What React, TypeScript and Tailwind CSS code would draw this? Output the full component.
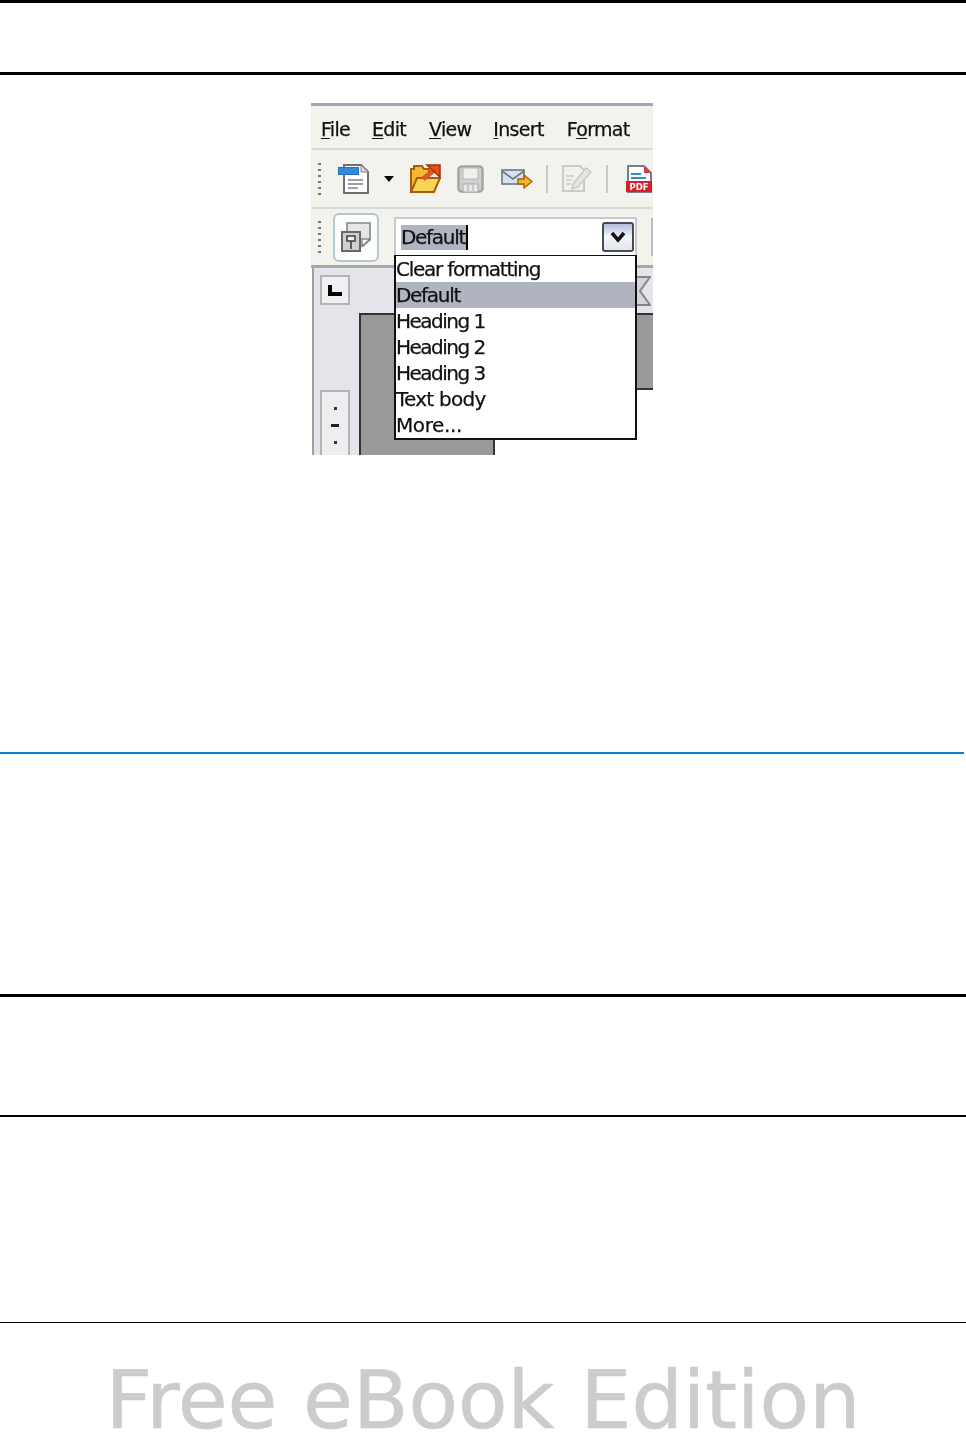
const vera = { fontFamily: '"DejaVu Sans", sans-serif' };

function Grip() {
  return (
    <div className="flex flex-col gap-[4px] w-[3px] ml-[7px]">
      {[0, 1, 2, 3, 4, 5].map((i) => (
        <div key={i} className="w-[3px] h-[2px] bg-[#77777a]" />
      ))}
    </div>
  );
}

function M({ k, r }: { k: string; r: string }) {
  return (
    <span>
      <span className="underline underline-offset-2 decoration-1">{k}</span>
      {r}
    </span>
  );
}

function NewDoc() {
  return (
    <svg width="31" height="30" viewBox="0 0 31 30">
      <path d="M6 1H23L30 8V29H6Z" fill="#fff" stroke="#6f7074" strokeWidth="2" />
      <path d="M23 1V8H30Z" fill="#d8d9de" stroke="#85868a" />
      <rect x="0.5" y="3.5" width="20" height="7" fill="#2f8be0" stroke="#2a6fb5" />
      <path d="M10 16H25M10 20H25M10 24H20" stroke="#7d8088" strokeWidth="1.6" />
    </svg>
  );
}
function Folder() {
  return (
    <svg width="32" height="30" viewBox="0 0 32 30">
      <path d="M2 28V5H5V2H13L15 5H20V28Z" fill="#f2bb36" stroke="#a75c0c" strokeWidth="2" />
      <path d="M2 28L8 14H31L25 28Z" fill="#fbd45a" stroke="#a75c0c" strokeWidth="2" />
      <path d="M14 15L24 7" stroke="#e2561f" strokeWidth="5" />
      <path d="M18 1H31V13Z" fill="#e2501c" stroke="#a52f10" strokeWidth="1.5" />
    </svg>
  );
}
function Save() {
  return (
    <svg width="27" height="28" viewBox="0 0 27 28">
      <rect x="1.5" y="1.5" width="24" height="25" rx="3" fill="#cfcfcd" stroke="#a4a5a3" strokeWidth="2.5" />
      <rect x="6" y="3" width="15" height="11" fill="#f0f0ee" stroke="#b8b8b6" />
      <rect x="6" y="19" width="15" height="8" fill="#e8e8e6" stroke="#a9a9a7" />
      <path d="M11 20V26M16 20V26" stroke="#a9a9a7" />
    </svg>
  );
}
function Mail() {
  return (
    <svg width="32" height="20" viewBox="0 0 32 20">
      <rect x="1" y="1" width="22" height="14" fill="#d9e0ee" stroke="#6f7784" strokeWidth="1.6" />
      <path d="M1 2L12 10L23 2" fill="none" stroke="#6f7784" strokeWidth="1.6" />
      <path d="M17 10H23V6L31 12.5L23 19V15H17Z" fill="#f5b52e" stroke="#a8600c" strokeWidth="1.4" />
    </svg>
  );
}
function EditDoc() {
  return (
    <svg width="31" height="27" viewBox="0 0 31 27">
      <path d="M2 1H19L23 5V26H2Z" fill="#f1f1ee" stroke="#cbccc8" strokeWidth="2" />
      <path d="M5 11H13M5 15H11M5 19H10" stroke="#cbccc8" strokeWidth="1.6" />
      <path d="M12 19L25 3L30 7L17 22L11 24Z" fill="#e4e4e0" stroke="#c6c7c3" strokeWidth="1.3" />
    </svg>
  );
}
function Pdf() {
  return (
    <svg width="26" height="28" viewBox="0 0 26 28">
      <path d="M2 1H18L25 8V27H2Z" fill="#fff" stroke="#71808f" strokeWidth="2" />
      <path d="M18 1V8H25Z" fill="#e8343a" />
      <path d="M5 9H15M5 13H20" stroke="#3a86cf" strokeWidth="2.2" />
      <rect x="0" y="16" width="26" height="11" fill="#d81f28" />
      <text x="13" y="25" fontSize="8.5" fontWeight="700" fill="#fff" textAnchor="middle" style={{ fontFamily: '"DejaVu Sans", sans-serif' }}>PDF</text>
    </svg>
  );
}
function Styles() {
  return (
    <svg width="30" height="30" viewBox="0 0 30 30">
      <path d="M6 1H29V18L22 24H6Z" fill="#e6e6e3" stroke="#85868a" strokeWidth="1.6" />
      <path d="M29 17H21V24Z" fill="#fff" stroke="#85868a" strokeWidth="1.4" />
      <rect x="1" y="10" width="18" height="19" fill="#cfcfcd" stroke="#66676a" strokeWidth="2" />
      <path d="M10 19V27M6 14H14V19H6Z" fill="#efefee" stroke="#3f4044" strokeWidth="1.6" />
    </svg>
  );
}

const rows = [
  { t: "Clear formatting", c: "h-[26px] tracking-[-1.25px]" },
  { t: "Default", c: "h-[26px] tracking-[-1.3px] bg-[#b0b3c0]" },
  { t: "Heading 1", c: "h-[26px] tracking-[-1.5px]" },
  { t: "Heading 2", c: "h-[26px] tracking-[-1.5px]" },
  { t: "Heading 3", c: "h-[26px] tracking-[-1.5px]" },
  { t: "Text body", c: "h-[26px] tracking-[-0.75px]" },
  { t: "More...", c: "h-[26px] tracking-[-0.4px]" },
];

export default function App() {
  return (
    <div className="relative w-[966px] h-[1433px] overflow-hidden bg-white" style={vera}>
      <div className="h-[3px] bg-black" />
      <div className="h-[3px] bg-black mt-[69px]" />

      <div className="relative w-[342px] h-[352px] ml-[311px] mt-[28px] overflow-hidden bg-white text-[#111] blur-[0.6px] [-webkit-text-stroke:0.25px_#111]">
        <div className="h-[3px] bg-[#a6a3bd]" />
        <div className="h-[44px] pt-[4px] bg-[#f3f3ee] flex items-center gap-[22px] pl-[10px] text-[19px] tracking-[-0.7px] border-b-2 border-[#d9d9dc]">
          <M k="F" r="ile" />
          <M k="E" r="dit" />
          <span className="ml-[1px]"><M k="V" r="iew" /></span>
          <M k="I" r="nsert" />
          <span className="ml-[1px]">
            F<span className="underline underline-offset-2 decoration-1">o</span>rmat
          </span>
        </div>
        <div className="h-[59px] bg-[#f3f3ee] flex items-center border-b-2 border-[#d9d9dc]">
          <Grip />
          <div className="ml-[17px] flex"><NewDoc /></div>
          <div className="ml-[15px] w-0 h-0 border-x-[5px] border-x-transparent border-t-[6px] border-t-black" />
          <div className="ml-[15px] flex"><Folder /></div>
          <div className="ml-[16px] flex"><Save /></div>
          <div className="ml-[17px] flex"><Mail /></div>
          <div className="ml-[13px] w-[2px] h-[28px] bg-[#c8c8c6]" />
          <div className="ml-[13px] flex"><EditDoc /></div>
          <div className="ml-[14px] w-[2px] h-[28px] bg-[#c8c8c6]" />
          <div className="ml-[18px] flex shrink-0"><Pdf /></div>
        </div>
        <div className="h-[56px] bg-[#f3f3ee] flex items-center">
          <Grip />
          <div className="ml-[12px] w-[46px] h-[49px] rounded-[6px] border-2 border-[#b4c6d4] bg-[#fdfdfb] flex items-center justify-center">
            <Styles />
          </div>
          <div className="ml-[15px] self-start mt-[8px] w-[243px] h-[38px] border-2 border-b-0 border-[#c9c9d0] bg-white flex items-center pl-[5px] pr-[1px] justify-between text-[20px] tracking-[-1.3px]">
            <span className="bg-[#b0b3c0] border-r-2 border-black leading-[25px] pr-[1px]">Default</span>
            <div className="w-[32px] h-[30px] rounded-[3px] border-2 border-[#484c54] bg-gradient-to-b from-[#b4bcdc] via-[#f4f5fa] to-[#e4e6f0] flex items-center justify-center">
              <svg width="16" height="12" viewBox="0 0 16 12">
                <path d="M2 2L8 9L14 2" fill="none" stroke="#111" strokeWidth="3.5" />
              </svg>
            </div>
          </div>
          <div className="ml-[14px] self-start mt-[9px] w-[2px] h-[38px] bg-[#bcbcc4]" />
        </div>
        <div className="h-[190px] border-t-[3px] border-[#a8a8a4] flex">
          <div className="w-[47px] shrink-0 ml-[1px] border-l-2 border-[#a0a09c] bg-[#e4e4ea] pl-[6px] pt-[7px] flex flex-col overflow-hidden">
            <div className="w-[30px] h-[30px] shrink-0 border-2 border-[#b4b4b8] bg-[#f0f0f3] flex items-center justify-center">
              <div className="w-[14px] h-[11px] border-l-[4px] border-b-[4px] border-black" />
            </div>
            <div className="w-[30px] h-[90px] shrink-0 mt-[85px] border-2 border-[#b4b4b8] bg-[#eeeef0] flex flex-col items-center gap-[14px] pt-[15px]">
              <div className="w-[3px] h-[3px] bg-[#333]" />
              <div className="w-[8px] h-[3px] bg-[#222]" />
              <div className="w-[3px] h-[3px] bg-[#333]" />
            </div>
          </div>
          <div className="flex-1 flex flex-col bg-white">
            <div className="h-[45px] bg-[#e4e4ea]" />
            <div className="h-[75px] bg-[#999] border-t-2 border-l-2 border-[#333]" />
            <div className="h-[67px] flex">
              <div className="w-[136px] bg-[#999] border-l-2 border-r-2 border-[#333]" />
              <div className="flex-1 h-[2px] bg-[#333]" />
            </div>
          </div>
        </div>

        <svg className="absolute left-[326px] top-[173px]" width="14" height="30" viewBox="0 0 14 30">
          <path d="M0 1H13L3 15L13 29H0" fill="#d6d6d8" stroke="#86868a" strokeWidth="2" />
        </svg>

        <div className="absolute left-[83px] top-[152px] w-[243px] h-[185px] border-x-2 border-b-2 border-t border-[#111] bg-white text-[20px] leading-[26px] text-[#111]">
          {rows.map((r) => (
            <div key={r.t} className={r.c}>
              {r.t}
            </div>
          ))}
        </div>
      </div>

      <div className="h-[2px] w-[964px] bg-[#0a7fd0] mt-[297px]" />
      <div className="h-[3px] bg-black mt-[240px]" />
      <div className="h-[2px] bg-black mt-[118px]" />
      <div className="h-[1px] bg-black mt-[205px]" />
      <div className="text-center text-[81px] leading-[66px] text-[#cccccc] mt-[44px] whitespace-nowrap [-webkit-text-stroke:0.6px_#cccccc]">
        Free eBook Edition
      </div>
    </div>
  );
}
